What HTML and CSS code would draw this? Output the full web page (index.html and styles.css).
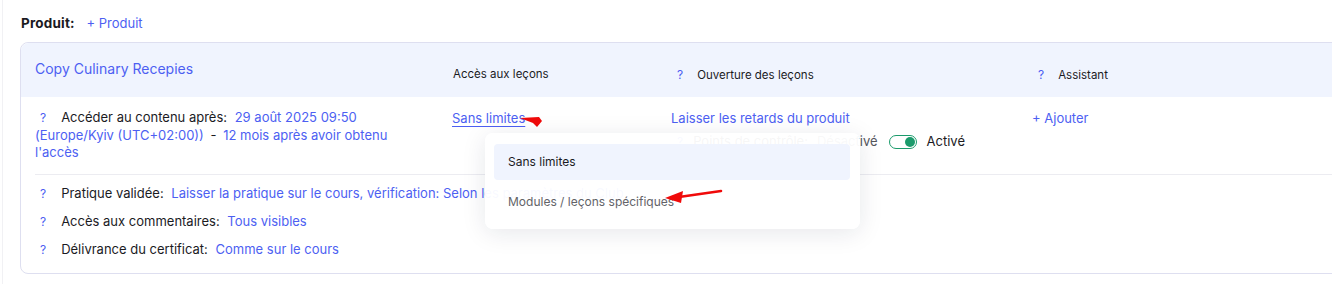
FILE: index.html
```html
<!DOCTYPE html>
<html lang="fr">
<head>
    <meta charset="UTF-8">
    <title>Produit</title>
    <link rel="stylesheet" href="styles.css">
</head>
<body>

<div class="page">
    <div class="product-title">
        <b>Produit:</b>
        <a class="link">+ Produit</a>
    </div>

    <div class="card">
        <div class="card-head">
            <div class="col name">Copy Culinary Recepies</div>
            <div class="col label">Accès aux leçons</div>
            <div class="col label"><span class="q">?</span>Ouverture des leçons</div>
            <div class="col label"><span class="q">?</span>Assistant</div>
        </div>

        <div class="card-row">
            <div class="col first">
                <span class="q">?</span><span class="key">Accéder au contenu après:</span>
                <span class="val">29 août 2025 09:50 (Europe/Kyiv (UTC+02:00))</span> <span class="dash">-</span>
                <span class="val">12 mois après avoir obtenu l'accès</span>
            </div>
            <div class="col access">
                <a class="link under">Sans limites</a>
                <svg class="arrow-one" width="26" height="12" viewBox="0 0 26 12">
                    <polygon points="1,2 20,1 23,5 18,11 14,7" fill="#f00a0a"/>
                </svg>

                <div class="dropdown">
                    <div class="item active">Sans limites</div>
                    <div class="item">Modules / leçons spécifiques</div>
                    <svg class="arrow-two" width="58" height="16" viewBox="0 0 58 16">
                        <line x1="14" y1="9" x2="56" y2="3" stroke="#f00a0a" stroke-width="2.6" stroke-linecap="round"/>
                        <polygon points="0,10 18,3 16,15" fill="#f00a0a"/>
                    </svg>
                </div>
            </div>
            <div class="col opening">
                <a class="link">Laisser les retards du produit</a>
                <div class="check">
                    <span class="q">?</span><span class="key">Points de contrôle:</span>
                    <span class="off">Désactivé</span>
                    <span class="toggle"><span class="knob"></span></span>
                    <span class="on">Activé</span>
                </div>
            </div>
            <div class="col helper">
                <a class="link">+ Ajouter</a>
            </div>
        </div>

        <div class="rows">
            <div class="line"><span class="q">?</span><span class="key">Pratique validée:</span> <span class="val">Laisser la pratique sur le cours, vérification: Selon les paramètres du Club</span></div>
            <div class="line"><span class="q">?</span><span class="key">Accès aux commentaires:</span> <span class="val">Tous visibles</span></div>
            <div class="line"><span class="q">?</span><span class="key">Délivrance du certificat:</span> <span class="val">Comme sur le cours</span></div>
        </div>
    </div>
</div>

</body>
</html>
```

FILE: styles.css
```css
body {
    margin: 0;
    font-family: Inter, "Noto Sans", sans-serif;
    font-size: 13px;
    color: #1b1b1f;
    background: #fff;
    overflow: hidden;
}
.page {
    padding: 14px 0 0 20px;
    border-left: 1px solid #f1f1f4;
    margin-left: 2px;
    height: 284px;
    box-sizing: border-box;
}
.product-title {
    height: 19px;
    line-height: 19px;
    margin-left: -2px;
}
.product-title b {
    font-weight: 700;
    font-size: 13.5px;
    letter-spacing: 0.2px;
    margin-right: 8px;
}
.link {
    color: #4d5ff2;
    cursor: pointer;
}
.card {
    margin-top: 9px;
    margin-left: -3px;
    width: 1340px;
    border: 1px solid #dedff0;
    border-radius: 8px;
    background: #fff;
}
.card-head {
    display: grid;
    grid-template-columns: 417px 219px 361px 1fr;
    background: #f0f4fe;
    border-radius: 8px 8px 0 0;
    height: 54px;
    padding-left: 14px;
}
.card-head .name {
    color: #4d5ff2;
    font-size: 14px;
    padding-top: 17px;
}
.card-head .label {
    font-size: 11.5px;
    padding-top: 24px;
    padding-left: 1px;
}
.card-head .label .q {
    margin-left: 5px;
    margin-right: 14px;
}
.q {
    color: #4d5ff2;
    display: inline-block;
    font-size: 12px;
    margin-right: 15px;
}
.card-row {
    display: grid;
    grid-template-columns: 417px 219px 361px 1fr;
    padding: 12px 0 12px 14px;
    line-height: 17.5px;
}
.col.first {
    padding-right: 48px;
}
.col.first .q {
    margin-left: 5px;
}
.key {
    margin-right: 4px;
}
.val {
    color: #4d5ff2;
}
.dash {
    margin: 0 3px;
}
.access {
    position: relative;
    padding-top: 1px;
}
.under {
    text-decoration: underline;
    text-underline-offset: 3px;
}
.arrow-one {
    position: absolute;
    left: 67px;
    top: 7px;
}
.dropdown {
    position: absolute;
    left: 33px;
    top: 24px;
    width: 375px;
    padding: 11px 10px 9px 9px;
    box-sizing: border-box;
    background: rgba(255, 255, 255, 0.96);
    border-radius: 8px;
    box-shadow: 0 4px 24px rgba(20, 30, 60, 0.1);
    display: flex;
    flex-direction: column;
    gap: 4px;
    z-index: 5;
    font-size: 12px;
}
.item {
    height: 36px;
    line-height: 36px;
    padding-left: 14px;
    border-radius: 4px;
    color: #626368;
}
.item.active {
    background: #f0f4fe;
    color: #1b1b1f;
}
.arrow-two {
    position: absolute;
    left: 180px;
    top: 55px;
}
.opening {
    padding-top: 1px;
}
.helper {
    padding-top: 1px;
}
.check {
    margin-top: 4px;
    display: flex;
    align-items: center;
    height: 20px;
}
.check .q {
    margin-left: 6px;
    margin-right: 10px;
}
.check .key {
    margin-right: 9px;
}
.off {
    color: #55565c;
}
.toggle {
    width: 24px;
    height: 12px;
    border: 1.5px solid #1c9b6c;
    border-radius: 8px;
    margin: 0 10px 0 11px;
    display: flex;
    align-items: center;
    justify-content: flex-end;
    padding: 0 1px;
}
.knob {
    width: 10px;
    height: 10px;
    border-radius: 50%;
    background: #1c9b6c;
}
.rows {
    margin: 0 0 0 14px;
    border-top: 1px solid #ececf1;
    padding: 4px 0 10px 0;
}
.line {
    height: 28px;
    line-height: 28px;
}
.line .q {
    margin-left: 5px;
}
```
